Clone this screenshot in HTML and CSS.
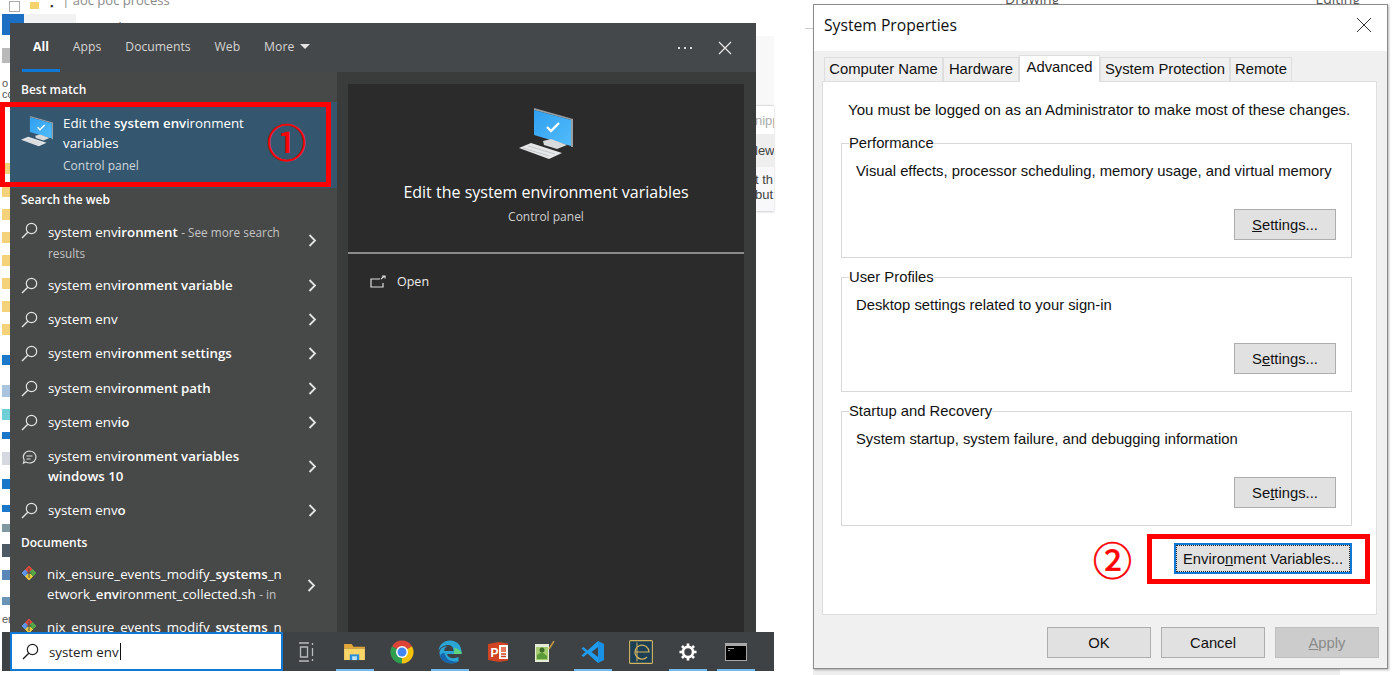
FILE: index.html
```html
<!DOCTYPE html>
<html lang="en">
<head>
    <meta charset="UTF-8">
    <meta name="viewport" content="width=device-width, initial-scale=1.0">
    <title>System environment variables</title>
    <link rel="stylesheet" href="styles.css">
</head>
<body>
    <svg class="defs" width="0" height="0">
        <defs>
            <linearGradient id="screenBlue" x1="0" y1="0" x2="1" y2="1">
                <stop offset="0" stop-color="#2f9ff0"/>
                <stop offset="1" stop-color="#52bcfb"/>
            </linearGradient>
            <symbol id="pc" viewBox="0 0 54 52">
                <path d="M15 0 L54 11 V39 L52 39 V12 L15 2 Z" fill="#9a9fa3"/>
                <path d="M15 2 L52 12 V38 L15 27 Z" fill="url(#screenBlue)"/>
                <path d="M28 19 L32 23 L40 15" fill="none" stroke="#fff" stroke-width="2.4"/>
                <path d="M24 33 L32 31 L48 37 L38 41 L25 37 Z" fill="#d8dadb"/>
                <path d="M0 40 L12 35 L43 45 L30 51 Z" fill="#e6e7e8"/>
                <path d="M4 40 L30 48 M9 38 L36 46" stroke="#b5b7b9" stroke-width="0.7"/>
            </symbol>
            <symbol id="mag" viewBox="0 0 17 17">
                <circle cx="10.5" cy="6.5" r="5.2" fill="none" stroke="currentColor" stroke-width="1.2"/>
                <path d="M6.8 10.2 L1 16" fill="none" stroke="currentColor" stroke-width="1.4"/>
            </symbol>
            <symbol id="chev" viewBox="0 0 9 13">
                <path d="M1.5 1 L7 6.5 L1.5 12" fill="none" stroke="currentColor" stroke-width="1.8"/>
            </symbol>
            <symbol id="gitdoc" viewBox="0 0 16 16">
                <path d="M1 8 L4.5 4.5 L8 8 L4.5 11.5 Z" fill="#5f97e6" stroke="#5f97e6" stroke-linejoin="round"/>
                <path d="M4.5 4.5 L8 1 L11.5 4.5 L8 8 Z" fill="#d9483b" stroke="#d9483b" stroke-linejoin="round"/>
                <path d="M8 8 L11.5 4.5 L15 8 L11.5 11.5 Z" fill="#56a648" stroke="#56a648" stroke-linejoin="round"/>
                <path d="M4.5 11.5 L8 8 L11.5 11.5 L8 15 Z" fill="#e9c93c" stroke="#e9c93c" stroke-linejoin="round"/>
                <path d="M8 3 V13 M5.5 8 H10.5" stroke="#4a4a4a" stroke-width="1"/>
            </symbol>
        </defs>
    </svg>

    <!-- bits of the desktop behind the two windows -->
    <div class="bg-title">
        <span class="bg-page"></span><span class="bg-folder"></span><span class="bg-dot">▪</span><span>| aoc poc process</span>
    </div>
    <div class="bg-file-tab"></div>
    <div class="bg-menu"><span>Home</span><span>Share</span><span>View</span></div>
    <div class="bg-strip">
        <span class="b-grey"></span><span class="b-text">o C<br>cc</span>
        <span class="b-folder b-folder-first"></span><span class="b-folder"></span><span class="b-folder"></span><span class="b-folder"></span>
        <span class="b-folder"></span><span class="b-folder"></span><span class="b-folder"></span><span class="b-folder"></span>
        <span class="b-blue"></span><span class="b-pale"></span><span class="b-cyan"></span><span class="b-blue b-blue-short"></span>
        <span class="b-doc"></span><span class="b-blue b-blue-a"></span><span class="b-blue b-blue-b"></span>
        <span class="b-image"></span><span class="b-film"></span><span class="b-win"></span><span class="b-app"></span><span class="b-tail">er</span>
    </div>
    <div class="bg-right">
        <div class="bg-right-top"></div>
        <div class="bg-right-card">
            <div class="bg-snip">nipp</div>
            <div class="bg-new">lew</div>
            <div class="bg-text">t th<br>but</div>
        </div>
    </div>
    <div class="bg-ribbon"><span>Drawing</span><span>Editing</span></div>
    <div class="bg-rule"></div>
    <div class="bg-bottom"></div>

    <!-- windows search flyout -->
    <div class="search">
        <div class="search-tabs">
            <nav class="tabs-left">
                <span class="s-tab s-tab-on">All</span>
                <span class="s-tab">Apps</span>
                <span class="s-tab">Documents</span>
                <span class="s-tab">Web</span>
                <span class="s-tab">More <i class="caret"></i></span>
            </nav>
            <div class="tabs-right">
                <span class="dots"><i></i><i></i><i></i></span>
                <svg class="close-x" width="14" height="14" viewBox="0 0 14 14"><path d="M1 1 L13 13 M13 1 L1 13" stroke="#e8e8e8" stroke-width="1.2"/></svg>
            </div>
        </div>
        <div class="search-body">
            <div class="results">
                <div class="r-head r-head-first">Best match</div>
                <div class="best">
                    <svg class="best-icon" width="32" height="31"><use href="#pc"/></svg>
                    <div class="best-text">
                        <div>Edit the <b>system env</b>ironment</div>
                        <div>variables</div>
                        <div class="sub">Control panel</div>
                    </div>
                </div>
                <div class="r-head r-head-web">Search the web</div>
                <div class="row row-tall">
                    <svg class="ico" width="17" height="17"><use href="#mag"/></svg>
                    <div class="r-text">system env<b>ironment</b> <span class="dim">- See more search results</span></div>
                    <svg class="chev" width="9" height="13"><use href="#chev"/></svg>
                </div>
                <div class="row">
                    <svg class="ico" width="17" height="17"><use href="#mag"/></svg>
                    <div class="r-text">system env<b>ironment variable</b></div>
                    <svg class="chev" width="9" height="13"><use href="#chev"/></svg>
                </div>
                <div class="row">
                    <svg class="ico" width="17" height="17"><use href="#mag"/></svg>
                    <div class="r-text">system env</div>
                    <svg class="chev" width="9" height="13"><use href="#chev"/></svg>
                </div>
                <div class="row">
                    <svg class="ico" width="17" height="17"><use href="#mag"/></svg>
                    <div class="r-text">system env<b>ironment settings</b></div>
                    <svg class="chev" width="9" height="13"><use href="#chev"/></svg>
                </div>
                <div class="row row-nudge">
                    <svg class="ico" width="17" height="17"><use href="#mag"/></svg>
                    <div class="r-text">system env<b>ironment path</b></div>
                    <svg class="chev" width="9" height="13"><use href="#chev"/></svg>
                </div>
                <div class="row">
                    <svg class="ico" width="17" height="17"><use href="#mag"/></svg>
                    <div class="r-text">system env<b>io</b></div>
                    <svg class="chev" width="9" height="13"><use href="#chev"/></svg>
                </div>
                <div class="row row-two">
                    <svg class="ico" width="17" height="17" viewBox="0 0 17 17">
                        <path d="M8.5 2 a6.5 6 0 1 1 -3.6 11 L2.4 14.2 L3.2 11 A6.5 6 0 0 1 8.5 2 Z M5.5 7 H11.5 M5.5 10 H9.5" fill="none" stroke="#ddd" stroke-width="1.1"/>
                    </svg>
                    <div class="r-text">system env<b>ironment variables windows 10</b></div>
                    <svg class="chev" width="9" height="13"><use href="#chev"/></svg>
                </div>
                <div class="row">
                    <svg class="ico" width="17" height="17"><use href="#mag"/></svg>
                    <div class="r-text">system env<b>o</b></div>
                    <svg class="chev" width="9" height="13"><use href="#chev"/></svg>
                </div>
                <div class="r-head r-head-docs">Documents</div>
                <div class="row row-doc">
                    <svg class="ico" width="16" height="16"><use href="#gitdoc"/></svg>
                    <div class="r-text r-break">nix_ensure_events_modify_<b>systems</b>_n<br>etwork_<b>env</b>ironment_collected.sh <span class="dim">- in</span></div>
                    <svg class="chev" width="9" height="13"><use href="#chev"/></svg>
                </div>
                <div class="row row-doc">
                    <svg class="ico" width="16" height="16"><use href="#gitdoc"/></svg>
                    <div class="r-text r-break">nix_ensure_events_modify_<b>systems</b>_n</div>
                </div>
            </div>
            <div class="detail-wrap">
                <div class="detail">
                    <svg class="detail-icon" width="54" height="52"><use href="#pc"/></svg>
                    <div class="detail-title">Edit the system environment variables</div>
                    <div class="detail-sub">Control panel</div>
                    <div class="detail-rule"></div>
                    <div class="detail-open">
                        <svg width="16" height="14" viewBox="0 0 16 14"><path d="M10 4 H1 V12 H13 V8 M11 4 L14.5 1 M12 1 H15 V3.5" fill="none" stroke="#ddd" stroke-width="1.2"/></svg>
                        <span>Open</span>
                    </div>
                </div>
            </div>
        </div>
    </div>

    <!-- taskbar -->
    <div class="taskbar">
        <div class="task-search">
            <svg class="ico-dark" width="17" height="17"><use href="#mag"/></svg>
            <span>system env</span><i class="cursor"></i>
        </div>
        <div class="task-icons">
            <span class="tb">
                <svg width="19" height="20" viewBox="0 0 19 20"><path d="M2 1 H12 M2 19 H12 M3.5 5 H10.5 V15 H3.5 Z M15.5 1 V3 M15.5 6 V14 M15.5 17 V19" fill="none" stroke="#b9bbbd" stroke-width="1.3"/></svg>
            </span>
            <span class="tb tb-on">
                <svg width="21" height="18" viewBox="0 0 22 19"><path d="M0 1 H8 L10 4 H22 V6 H0 Z" fill="#e2a53a"/><path d="M0 6 H22 V18 H0 Z" fill="#fbd568"/><path d="M6 12 H16 V18 H6 Z" fill="#2a8fd6"/><path d="M8.5 14 H13.5 V18 H8.5 Z" fill="#bde3f7"/></svg>
            </span>
            <span class="tb">
                <svg width="24" height="24" viewBox="0 0 24 24"><path d="M12 12 L2.04 6.25 A11.5 11.5 0 0 1 21.96 6.25 Z" fill="#db4437"/><path d="M12 12 L21.96 6.25 A11.5 11.5 0 0 1 12 23.5 Z" fill="#f4c20d"/><path d="M12 12 L12 23.5 A11.5 11.5 0 0 1 2.04 6.25 Z" fill="#2f9e4f"/><circle cx="12" cy="12" r="6" fill="#fff"/><circle cx="12" cy="12" r="4.5" fill="#4285f4"/></svg>
            </span>
            <span class="tb tb-on">
                <svg width="24" height="24" viewBox="0 0 24 24"><path d="M12 .5 C19 .5 23.5 5.5 23.5 12 V14 H9 C9.5 18 15 19.5 20.5 17 V21.5 C14 25 4.5 23.5 2 16 C0 9 5 6 9.5 6.5 C6 8 6 10 6.5 11 H15.5 C15.5 7 13 5 10 5 C6 5 2 7.5 .5 11 C1 5 6 .5 12 .5 Z" fill="#2aa6d6"/><path d="M16 8 C19 8 21.5 10 23.5 12 V14 H15.5 C16.5 12 16.5 10 16 8 Z" fill="#5fd37b"/><path d="M2 16 C4.5 23.5 14 25 20.5 21.5 C13 22 8 20 6.5 13 C4 13 2.5 14 2 16 Z" fill="#1765ac"/></svg>
            </span>
            <span class="tb">
                <svg width="20" height="20" viewBox="0 0 20 20"><path d="M11 0 L20 1.5 V18.5 L11 20 L0 18 V2 Z" fill="#d04423"/><path d="M11 3 H20 V17 H11 Z" fill="#fff"/><path d="M13 12 H18 M13 14.5 H18" stroke="#d04423" stroke-width="1.4"/><path d="M13 5 H18 V10 H13 Z" fill="#e87b5f"/><text x="2.5" y="14.5" font-size="12" font-weight="700" fill="#fff" font-family="Liberation Sans, sans-serif">P</text></svg>
            </span>
            <span class="tb">
                <svg width="22" height="22" viewBox="0 0 22 22"><path d="M1 3 H15 V21 H1 Z" fill="#e4ecd6"/><path d="M2 6 H14 V19 H2 Z" fill="#a8cc72"/><circle cx="8" cy="9" r="2.5" fill="#3f6e2a"/><path d="M3 14 L8 11 L13 15 V18 H3 Z" fill="#5b9a38"/><path d="M15 8 L20 0" stroke="#c69a3e" stroke-width="1.5"/></svg>
            </span>
            <span class="tb tb-on">
                <svg width="24" height="24" viewBox="0 0 24 24"><path d="M17 1 L23 4 V20 L17 23 L6.5 13.5 L2.5 17 L.5 15.5 L4.5 12 L.5 8.5 L2.5 7 L6.5 10.5 Z M17 7 L10.5 12 L17 17 Z" fill="#1f9cf0" fill-rule="evenodd"/><path d="M17 1 L23 4 V20 L17 23 Z" fill="#0f7fcf" opacity="0.35"/></svg>
            </span>
            <span class="tb">
                <svg width="24" height="24" viewBox="0 0 24 24"><rect x=".6" y=".6" width="22.8" height="22.8" rx="1" fill="#1d3f55" stroke="#d3b35e" stroke-width="1.1"/><path d="M8 2.5 V21.5" stroke="#d3b35e"/><path d="M6 12 H20 A7 7 0 1 0 18 17" fill="none" stroke="#d3b35e" stroke-width="1.2"/></svg>
            </span>
            <span class="tb tb-on">
                <svg width="18" height="18" viewBox="0 0 20 20"><circle cx="10" cy="10" r="5.6" fill="none" stroke="#fff" stroke-width="3"/><path d="M10 0.5 V4 M10 16 V19.5 M0.5 10 H4 M16 10 H19.5 M3.3 3.3 L5.7 5.7 M14.3 14.3 L16.7 16.7 M3.3 16.7 L5.7 14.3 M14.3 5.7 L16.7 3.3" stroke="#fff" stroke-width="3"/></svg>
            </span>
            <span class="tb tb-on">
                <svg width="22" height="18" viewBox="0 0 22 18"><rect x=".5" y=".5" width="21" height="17" fill="#000" stroke="#a9a9a9"/><rect x="1" y="1" width="20" height="2" fill="#a9a9a9"/><path d="M3 5.5 H9 M3 7.5 H5" stroke="#ccc" stroke-width="0.8"/></svg>
            </span>
        </div>
    </div>

    <!-- system properties dialog -->
    <div class="dialog">
        <div class="dlg-title">
            <span>System Properties</span>
            <svg width="16" height="16" viewBox="0 0 16 16"><path d="M1 1 L15 15 M15 1 L1 15" stroke="#333" stroke-width="1"/></svg>
        </div>
        <div class="dlg-body">
            <div class="dlg-tabs">
                <span class="d-tab d-tab-name">Computer Name</span>
                <span class="d-tab d-tab-hw">Hardware</span>
                <span class="d-tab d-tab-on">Advanced</span>
                <span class="d-tab d-tab-sys">System Protection</span>
                <span class="d-tab d-tab-rem">Remote</span>
            </div>
            <div class="dlg-panel">
                <p class="dlg-note">You must be logged on as an Administrator to make most of these changes.</p>
                <fieldset class="group">
                    <legend>Performance</legend>
                    <p>Visual effects, processor scheduling, memory usage, and virtual memory</p>
                    <button class="btn btn-settings"><u>S</u>ettings...</button>
                </fieldset>
                <fieldset class="group">
                    <legend>User Profiles</legend>
                    <p>Desktop settings related to your sign-in</p>
                    <button class="btn btn-settings">S<u>e</u>ttings...</button>
                </fieldset>
                <fieldset class="group">
                    <legend>Startup and Recovery</legend>
                    <p>System startup, system failure, and debugging information</p>
                    <button class="btn btn-settings">Se<u>t</u>tings...</button>
                </fieldset>
                <div class="env-row">
                    <button class="btn btn-env">Enviro<u>n</u>ment Variables...</button>
                </div>
            </div>
            <div class="dlg-actions">
                <button class="btn btn-act">OK</button>
                <button class="btn btn-act">Cancel</button>
                <button class="btn btn-act btn-off"><u>A</u>pply</button>
            </div>
        </div>
    </div>

    <!-- red annotations drawn over the screenshots -->
    <div class="mark mark-one"></div>
    <div class="mark mark-two"></div>
    <div class="num num-one">①</div>
    <div class="num num-two">②</div>
</body>
</html>
```

FILE: styles.css
```css
* {
    box-sizing: border-box;
}
html, body {
    margin: 0;
    padding: 0;
}
body {
    position: relative;
    width: 1393px;
    height: 675px;
    overflow: hidden;
    background-color: #fff;
    font-family: "Open Sans", sans-serif;
}
.defs {
    position: absolute;
}

/* backdrop */
.bg-title {
    position: absolute;
    left: 9px;
    top: -12px;
    height: 24px;
    display: flex;
    align-items: center;
    color: #8a8a8a;
    font-size: 13px;
}
.bg-page {
    width: 11px;
    height: 11px;
    margin-top: 12px;
    margin-right: 10px;
    border: 1px solid #aaa;
}
.bg-folder {
    width: 9px;
    height: 7px;
    margin-top: 10px;
    margin-right: 11px;
    background-color: #f5d36b;
}
.bg-dot {
    margin-top: 10px;
    margin-right: 9px;
    font-size: 9px;
    color: #333;
}
.bg-file-tab {
    position: absolute;
    left: 2px;
    top: 14px;
    width: 22px;
    height: 21px;
    background-color: #1d6fc4;
}
.bg-menu {
    position: absolute;
    left: 24px;
    top: 14px;
    width: 140px;
    height: 9px;
    display: flex;
    gap: 40px;
    padding: 6px 0 0 14px;
    overflow: hidden;
    font-size: 12px;
    line-height: 16px;
    color: #555;
    background: linear-gradient(#f2f2f2, #f2f2f2) left top / 52px 9px no-repeat;
}
.bg-strip {
    position: absolute;
    left: 2px;
    top: 36px;
    width: 8px;
    height: 596px;
    overflow: hidden;
    display: flex;
    flex-direction: column;
    background-color: #fff;
    font-family: "Liberation Sans", sans-serif;
    font-size: 11px;
    line-height: 11px;
    color: #555;
}
.bg-strip span {
    flex: none;
    display: block;
    white-space: nowrap;
}
.b-grey {
    height: 15px;
    margin-top: 12px;
    background-color: #b9b9b9;
}
.b-text {
    height: 22px;
    margin-top: 15px;
}
.b-folder {
    height: 11px;
    margin-top: 12px;
    background-color: #f3d27a;
}
.b-folder-first {
    margin-top: 63px;
}
.b-blue {
    height: 10px;
    margin-top: 20px;
    background-color: #1d77c9;
}
.b-pale {
    height: 12px;
    margin-top: 20px;
    background-color: #a8c4de;
}
.b-cyan {
    height: 11px;
    margin-top: 12px;
    background-color: #6fcfd6;
}
.b-blue-short {
    height: 7px;
    margin-top: 12px;
}
.b-doc {
    height: 13px;
    margin-top: 13px;
    background-color: #d5d9df;
}
.b-blue-a {
    margin-top: 14px;
}
.b-blue-b {
    height: 7px;
    margin-top: 16px;
}
.b-image {
    height: 8px;
    margin-top: 12px;
    background-color: #7f97a0;
}
.b-film {
    height: 13px;
    margin-top: 12px;
    background-color: #4e5a63;
}
.b-win {
    height: 10px;
    margin-top: 13px;
    background-color: #5a86b8;
}
.b-app {
    height: 8px;
    margin-top: 17px;
    background-color: #6b93b5;
}
.b-tail {
    margin-top: 9px;
}
.bg-right {
    position: absolute;
    left: 756px;
    top: 36px;
    width: 18px;
}
.bg-right-top {
    height: 69px;
    background-color: #f8f8f8;
}
.bg-right-card {
    height: 106px;
    background-color: #f8f8fb;
    border-top: 1px solid #ddd;
    overflow: hidden;
    font-family: "Liberation Sans", sans-serif;
    font-size: 13px;
    color: #444;
    white-space: nowrap;
    box-shadow: 0 1px 2px #ccc;
}
.bg-snip {
    height: 28px;
    padding-top: 7px;
    margin-left: -1px;
    background-color: #fff;
    color: #aaa;
}
.bg-new {
    height: 33px;
    padding-top: 9px;
    margin-left: -1px;
    background-color: #eee;
}
.bg-text {
    padding-top: 5px;
    line-height: 15px;
    margin-left: -1px;
}
.bg-ribbon {
    position: absolute;
    left: 1005px;
    top: -11px;
    width: 380px;
    display: flex;
    justify-content: space-between;
    padding-right: 25px;
    font-size: 14px;
    color: #555;
}
.bg-rule {
    position: absolute;
    left: 805px;
    top: 28px;
    width: 8px;
    height: 1px;
    background-color: #ccc;
}
.bg-bottom {
    position: absolute;
    left: 813px;
    top: 668px;
    width: 527px;
    height: 7px;
    background-color: #eee;
}

/* search flyout */
.search {
    position: absolute;
    left: 10px;
    top: 23px;
    width: 746px;
    height: 612px;
    display: flex;
    flex-direction: column;
    color: #fff;
    font-size: 13.3px;
    background-color: #474848;
}
.search-tabs {
    flex: none;
    height: 49px;
    display: flex;
    justify-content: space-between;
    align-items: center;
    padding: 0 24px 0 12px;
    background-color: #45484a;
}
.tabs-left {
    display: flex;
    height: 100%;
}
.s-tab {
    display: flex;
    align-items: center;
    gap: 6px;
    margin-right: 24px;
    font-size: 12.2px;
    color: #d4d4d4;
    border-bottom: 3px solid transparent;
}
.s-tab-on {
    padding: 0 11px;
    margin-right: 13px;
    color: #fff;
    font-weight: 700;
    border-bottom-color: #0f78d4;
}
.caret {
    border-left: 5px solid transparent;
    border-right: 5px solid transparent;
    border-top: 5px solid #e4e4e4;
}
.tabs-right {
    display: flex;
    align-items: center;
    gap: 26px;
}
.dots {
    display: flex;
    gap: 4px;
}
.dots i {
    width: 2px;
    height: 2px;
    background-color: #ddd;
}
.search-body {
    flex: 1;
    min-height: 0;
    display: flex;
}
.results {
    flex: none;
    width: 327px;
    overflow: hidden;
}
.r-head {
    padding-left: 11px;
    font-size: 12px;
    font-weight: 600;
    line-height: 18px;
}
.r-head-first {
    padding-top: 9px;
    height: 30px;
}
.r-head-web {
    height: 32px;
    padding-top: 3px;
}
.r-head-docs {
    height: 24px;
    margin-top: 7px;
}
.best {
    height: 86px;
    display: flex;
    padding: 12px 0 0 11px;
    background-color: #34566f;
}
.best-icon {
    flex: none;
    margin-top: 2px;
}
.best-text {
    margin-left: 10px;
    line-height: 19.5px;
}
.best-text .sub {
    margin-top: 3px;
    font-size: 12px;
    color: #cfd6db;
}
b {
    font-weight: 600;
}
.row {
    height: 34px;
    display: flex;
    align-items: center;
    padding-left: 11px;
    color: #fff;
}
.row-nudge {
    margin-top: 1px;
}
.row-tall {
    height: 48px;
    align-items: flex-start;
    padding-top: 2px;
}
.row-two {
    height: 54px;
}
.row-doc {
    height: 53px;
    align-items: flex-start;
    padding-top: 7px;
}
.ico {
    flex: none;
    color: #e4e4e4;
}
.row-two .ico {
    margin-top: -18px;
}
.r-text {
    width: 248px;
    margin-left: 10px;
    line-height: 20px;
}
.row-tall .r-text {
    line-height: 21px;
}
.row-tall .chev {
    margin-top: 12px;
}
.row-doc .chev {
    margin-top: 14px;
}
.r-break {
    white-space: nowrap;
    line-height: 19.5px;
}
.dim {
    font-size: 11.8px;
    color: #c4c4c4;
}
.chev {
    flex: none;
    margin-left: 12px;
    color: #e4e4e4;
}
.detail-wrap {
    flex: 1;
    padding: 12px 12px 0 11px;
    background-color: #3a3b3b;
}
.detail {
    height: 100%;
    display: flex;
    flex-direction: column;
    align-items: center;
    background-color: #2b2b2b;
}
.detail-icon {
    margin-top: 24px;
}
.detail-title {
    margin-top: 20px;
    font-size: 16px;
    line-height: 24px;
}
.detail-sub {
    margin-top: 4px;
    font-size: 12px;
    color: #cfcfcf;
}
.detail-rule {
    align-self: stretch;
    height: 2px;
    margin-top: 27px;
    background-color: #8b8b8b;
}
.detail-open {
    align-self: flex-start;
    display: flex;
    align-items: center;
    gap: 11px;
    margin: 19px 0 0 22px;
    font-size: 12.5px;
    color: #eee;
}

/* taskbar */
.taskbar {
    position: absolute;
    left: 2px;
    top: 632px;
    width: 772px;
    height: 39px;
    display: flex;
    background-color: #3f4245;
}
.task-search {
    flex: none;
    width: 273px;
    height: 39px;
    margin-left: 8px;
    display: flex;
    align-items: center;
    padding-left: 10px;
    background-color: #fff;
    border: 2px solid #0f78d4;
    color: #222;
    font-size: 13.3px;
}
.ico-dark {
    color: #222;
    margin-right: 10px;
}
.cursor {
    width: 1px;
    height: 17px;
    margin-left: 1px;
    background-color: #111;
}
.task-icons {
    display: flex;
}
.tb {
    width: 47.7px;
    height: 39px;
    display: flex;
    align-items: center;
    justify-content: center;
}
.tb-on {
    background: linear-gradient(#76b9ed, #76b9ed) center bottom / 38px 2px no-repeat;
}

/* dialog */
.dialog {
    position: absolute;
    left: 813px;
    top: 4px;
    width: 575px;
    height: 665px;
    display: flex;
    flex-direction: column;
    background-color: #f0f0f0;
    border: 1px solid #8c8c8c;
    box-shadow: 1px 1px 2px rgba(0, 0, 0, 0.3);
    font-family: "Liberation Sans", sans-serif;
    font-size: 14.8px;
    color: #111;
}
.dlg-title {
    flex: none;
    height: 46px;
    display: flex;
    align-items: center;
    justify-content: space-between;
    padding: 0 15px 6px 10px;
    background-color: #fff;
    font-family: "Open Sans", sans-serif;
    font-size: 15.7px;
}
.dlg-body {
    flex: 1;
    padding: 4px 0 0 8px;
}
.dlg-tabs {
    display: flex;
    align-items: flex-end;
    height: 26px;
    padding-left: 2px;
}
.d-tab {
    height: 24px;
    padding-top: 3px;
    text-align: center;
    background-color: #f0f0f0;
    border: 1px solid #dedede;
    border-bottom: none;
    white-space: nowrap;
}
.d-tab-name {
    width: 119px;
}
.d-tab-hw {
    width: 76px;
}
.d-tab-sys {
    width: 130px;
}
.d-tab-rem {
    width: 62px;
}
.d-tab-on {
    position: relative;
    top: 1px;
    width: 81px;
    height: 27px;
    background-color: #fff;
}
.dlg-panel {
    width: 555px;
    height: 534px;
    padding: 0 24px 0 18px;
    background-color: #fff;
    border: 1px solid #dedede;
}
.dlg-note {
    margin: 19px 0 0 7px;
    font-size: 15px;
    line-height: 18px;
    white-space: nowrap;
}
.group {
    height: 123px;
    margin: 16px 0 0 0;
    padding: 0 15px 0 14px;
    border: 1px solid #d8d8d8;
    display: flex;
    flex-direction: column;
    min-width: 0;
}
.group + .group {
    margin-top: 11px;
}
.group legend {
    margin-left: -7px;
    padding: 0;
    line-height: 17px;
}
.group p {
    margin: 10px 0 0 0;
    line-height: 18px;
}
.btn {
    font-family: "Liberation Sans", sans-serif;
    font-size: 14.8px;
    color: #111;
    background-color: #e1e1e1;
    border: 1px solid #adadad;
    padding: 0;
}
.btn-settings {
    align-self: flex-end;
    width: 102px;
    height: 31px;
    margin-top: 29px;
}
.env-row {
    display: flex;
    justify-content: flex-end;
    padding-top: 17px;
}
.btn-env {
    width: 178px;
    height: 31px;
    border: 2px solid #0f78d4;
    outline: 1px dotted #222;
    outline-offset: -3px;
}
.dlg-actions {
    display: flex;
    gap: 10px;
    margin-top: 12px;
    padding-left: 225px;
}
.btn-act {
    width: 104px;
    height: 31px;
}
.btn-off {
    background-color: #cccccc;
    border-color: #bfbfbf;
    color: #8a8a8a;
}

/* annotations */
.mark {
    position: absolute;
    border: 5px solid #f00;
}
.mark-one {
    left: 0;
    top: 102px;
    width: 331px;
    height: 85px;
}
.mark-two {
    left: 1147px;
    top: 534px;
    width: 223px;
    height: 50px;
}
.num {
    position: absolute;
    color: #f00;
    font-family: "Noto Sans CJK SC", sans-serif;
    font-size: 39px;
    line-height: 44px;
    -webkit-text-stroke: 0.7px #f00;
}
.num-one {
    left: 267px;
    top: 118px;
}
.num-two {
    left: 1093px;
    top: 536px;
}
```
